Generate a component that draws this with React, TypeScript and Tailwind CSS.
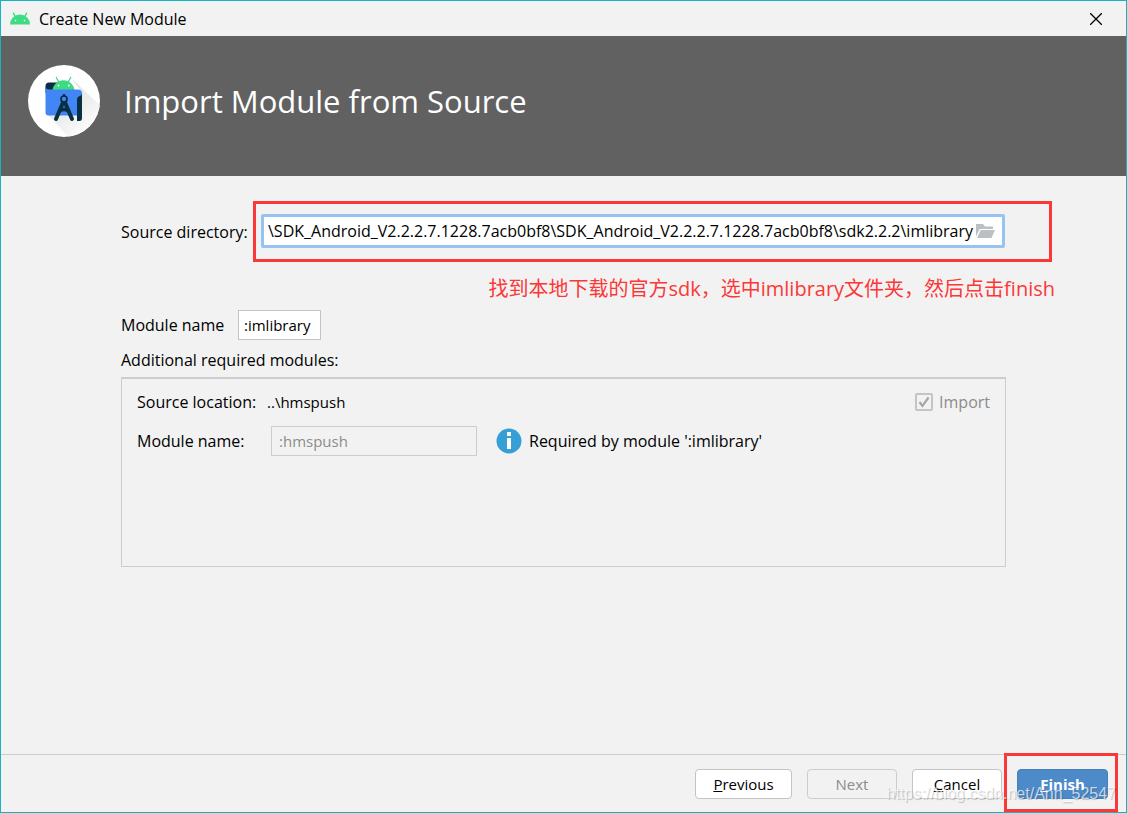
import React, { useState } from "react";

const AndroidHead: React.FC<{ className?: string }> = ({ className }) => (
  <svg viewBox="0 0 20 13" className={className} aria-hidden="true">
    <path d="M0 12.5a10 10 0 0 1 20 0z" fill="#3ddc84" />
    <path
      d="M5.2 4.6 3.4 1.2M14.8 4.6l1.8-3.4"
      stroke="#3ddc84"
      strokeWidth="1.4"
      strokeLinecap="round"
    />
    <circle cx="5.5" cy="8.5" r="0.8" fill="#fff" />
    <circle cx="14.5" cy="8.5" r="0.8" fill="#fff" />
  </svg>
);

const StudioLogo: React.FC = () => (
  <svg
    viewBox="0 0 72 72"
    className="h-[72px] w-[72px] shrink-0"
    aria-hidden="true"
  >
    <defs>
      <linearGradient id="shade" x1="0.2" y1="0.2" x2="0.7" y2="0.9">
        <stop offset="0" stopColor="#dedede" />
        <stop offset="1" stopColor="#fefefe" />
      </linearGradient>
      <clipPath id="disc">
        <circle cx="36" cy="36" r="36" />
      </clipPath>
    </defs>
    <circle cx="36" cy="36" r="36" fill="#fff" />
    <path
      d="M43 13 76 44v32H44L19 49l34-23z"
      fill="url(#shade)"
      clipPath="url(#disc)"
    />
    <path d="M21 17.500h9V28H17.500v-7a3.500 3.500 0 0 1 3.500-3.500z" fill="#073042" />
    <path d="M24.500 26a11 10.700 0 0 1 22 0z" fill="#3ddc84" />
    <path
      d="M30.500 16.500 28.300 12.500M40.500 16.500l2.200-4"
      stroke="#3ddc84"
      strokeWidth="1.300"
      strokeLinecap="round"
    />
    <circle cx="30.500" cy="20.500" r="0.900" fill="#fff" />
    <circle cx="40.800" cy="20.500" r="0.900" fill="#fff" />
    <path
      d="M17.500 21q0 3.500 4 3.500H50q4 0 4 4v5l-4 17H20.500q-3 0-3-3z"
      fill="#4285f4"
    />
    <path
      d="M49 34.500q0-3 3-3.500 2-.5 2-3v25q0 3-2.500 3H49z"
      fill="#073042"
    />
    <circle
      cx="36"
      cy="34"
      r="3"
      fill="none"
      stroke="#073042"
      strokeWidth="1.700"
    />
    <path d="M36 29v2.500" stroke="#073042" strokeWidth="2.200" />
    <path
      d="m34.800 38-6.800 16M37.200 38 44 54"
      stroke="#073042"
      strokeWidth="4"
      strokeLinecap="round"
    />
    <path
      d="M31 48q5-3.500 10 0l-1.500-4.500q-3.500-1.500-7 0z"
      fill="#073042"
    />
  </svg>
);

const FolderIcon: React.FC = () => (
  <svg viewBox="0 0 20 14" className="h-[14px] w-5" aria-hidden="true">
    <path d="M0 12.500V0h7l2 2.500h8V5H3.700z" fill="#bac0c4" />
    <path d="M4.700 6h14.300l-3.500 8H1z" fill="#bac0c4" />
  </svg>
);

const InfoIcon: React.FC = () => (
  <svg
    viewBox="0 0 26 26"
    className="h-[26px] w-[26px] shrink-0"
    aria-hidden="true"
  >
    <circle cx="13" cy="13" r="12.500" fill="#389fd6" />
    <path d="M11 4h4v4h-4zM11 10h4v11h-4z" fill="#fff" />
  </svg>
);

const App: React.FC = () => {
  const [source, setSource] = useState(
    "\\SDK_Android_V2.2.2.7.1228.7acb0bf8\\SDK_Android_V2.2.2.7.1228.7acb0bf8\\sdk2.2.2\\imlibrary"
  );
  const [moduleName, setModuleName] = useState(":imlibrary");

  return (
    <div className="relative flex min-h-screen flex-col border border-[#12b5c0] bg-[#f2f2f2] font-['Open_Sans','Noto_Sans_CJK_SC',sans-serif] text-[16px] leading-5 text-black">
      <div className="flex h-[35px] items-center pr-6 pl-[9px]">
        <AndroidHead className="mr-[9px] h-[13px] w-5" />
        <span>Create New Module</span>
        <button type="button" aria-label="Close" className="ml-auto">
          <svg viewBox="0 0 12 12" className="h-3 w-3" aria-hidden="true">
            <path d="m0 0 12 12M12 0 0 12" stroke="#000" strokeWidth="1.300" />
          </svg>
        </button>
      </div>

      <header className="flex h-[140px] items-start bg-[#616161] px-[27px] pt-[29px]">
        <StudioLogo />
        <h1 className="mt-4 ml-6 text-[31px] leading-10 text-white">
          Import Module from Source
        </h1>
      </header>

      <main className="flex-1 pt-[25px] pl-[120px]">
        <div className="mr-[74px] flex items-center">
          <label htmlFor="source" className="w-[132px] shrink-0">
            Source directory:
          </label>
          <div className="flex-1 border-3 border-[#fb3838] pt-[10px] pr-11 pb-[11px] pl-[5px]">
            <div className="flex h-[34px] items-center rounded-xs border-3 border-[#97c3f3] bg-white pr-[6px] pl-1">
              <input
                id="source"
                type="text"
                value={source}
                onChange={(e) => setSource(e.target.value)}
                className="min-w-0 flex-1 outline-none"
              />
              <button type="button" aria-label="Browse">
                <FolderIcon />
              </button>
            </div>
          </div>
        </div>

        <p className="mt-3 mr-[71px] text-right text-[20px] leading-[30px] text-[#fb3838]">
          找到本地下载的官方sdk，选中imlibrary文件夹，然后点击finish
        </p>

        <div className="mt-[6px] flex items-center">
          <label htmlFor="module" className="w-[117px]">
            Module name
          </label>
          <input
            id="module"
            type="text"
            value={moduleName}
            onChange={(e) => setModuleName(e.target.value)}
            className="h-[30px] w-[83px] border border-[#c4c4c4] bg-white px-[5px] text-[15px] outline-none"
          />
        </div>
        <p className="mt-[10px]">Additional required modules:</p>

        <section className="mt-[7px] mr-[120px] h-[190px] border border-t-2 border-[#cdcdcd] px-[15px] pt-[13px]">
          <div className="flex items-center">
            <span className="w-[130px]">Source location:</span>
            <span className="text-[15px]">..\hmspush</span>
            <label className="ml-auto flex items-center gap-[6px] text-[#8c8c8c]">
              <span className="relative flex">
                <input
                  type="checkbox"
                  checked
                  disabled
                  readOnly
                  className="h-[18px] w-[18px] appearance-none rounded-xs border-2 border-[#c4c4c4]"
                />
                <svg
                  viewBox="0 0 18 18"
                  className="absolute inset-0 h-[18px] w-[18px]"
                  aria-hidden="true"
                >
                  <path
                    d="m4.500 9 3 4 6-8.500"
                    fill="none"
                    stroke="#a6a6a6"
                    strokeWidth="2.200"
                  />
                </svg>
              </span>
              Import
            </label>
          </div>
          <div className="mt-[14px] flex items-center">
            <label htmlFor="required" className="w-[134px]">
              Module name:
            </label>
            <input
              id="required"
              type="text"
              value=":hmspush"
              disabled
              className="h-[30px] w-[206px] border border-[#cdcdcd] px-[7px] text-[15px] text-[#8c8c8c]"
            />
            <span className="ml-[19px] flex items-center gap-[7px]">
              <InfoIcon />
              Required by module &apos;:imlibrary&apos;
            </span>
          </div>
        </section>
      </main>

      <footer className="flex h-[58px] items-center justify-end gap-[15px] border-t border-[#cdcdcd] pr-[18px] text-[15px]">
        <button
          type="button"
          className="h-[30px] w-[97px] rounded-sm border border-[#c4c4c4] bg-white"
        >
          <u>P</u>revious
        </button>
        <button
          type="button"
          disabled
          className="h-[30px] w-[90px] rounded-sm border border-[#cdcdcd] text-[#8c8c8c]"
        >
          Next
        </button>
        <button
          type="button"
          className="h-[30px] w-[90px] rounded-sm border border-[#c4c4c4] bg-white"
        >
          <u>C</u>ancel
        </button>
        <div className="relative">
          <button
            type="button"
            className="block h-[30px] w-[91px] rounded-sm border border-[#4580be] bg-[#4d8ac9] font-bold text-white"
          >
            <u>F</u>inish
          </button>
          <div className="pointer-events-none absolute -top-4 -right-[10px] -bottom-[13px] -left-[13px] border-3 border-[#fb3838]" />
        </div>
      </footer>
      <span className="pointer-events-none absolute right-[10px] bottom-2 font-['Liberation_Sans',sans-serif] text-[16px] leading-5 text-white/70 [text-shadow:1px_1px_1px_rgba(0,0,0,0.22)]">
        https://blog.csdn.net/Ann_52547
      </span>
    </div>
  );
};

export default App;
